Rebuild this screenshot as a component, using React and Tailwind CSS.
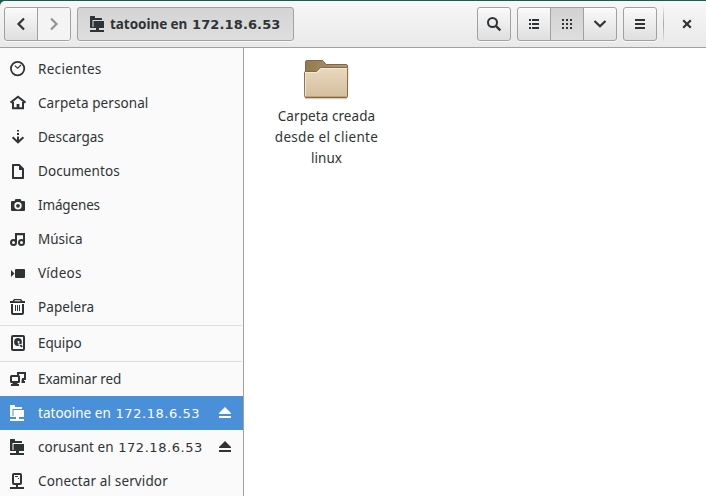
import React from "react";

const Svg = ({ children, className = "" }) => (
  <svg width="16" height="16" viewBox="0 0 16 16" fill="currentColor" className={`block shrink-0 ${className}`}>
    {children}
  </svg>
);

const Recent = () => (
  <Svg>
    <circle cx="7.6" cy="7.6" r="6.7" fill="none" stroke="currentColor" strokeWidth="1.8" />
    <path d="M4.8 4.6 7.6 7.2 11 4" fill="none" stroke="currentColor" strokeWidth="1.1" />
  </Svg>
);
const Home = () => (
  <Svg>
    <path d="M.5 7.6 8 1.7 15.500 7.600" fill="none" stroke="currentColor" strokeWidth="2" />
    <path d="M2 7h2v5.300h2.600V9h2.800v3.300H12V7h2v7.300H2z" />
  </Svg>
);
const Download = () => (
  <Svg>
    <path d="M7 1h2v1.500H7zM7 4h2v2H7zM7 7.500h2V12H7z" />
    <path d="M2.600 8.300 8 13.300l5.400-5" fill="none" stroke="currentColor" strokeWidth="2" />
  </Svg>
);
const Document = () => (
  <Svg>
    <path fillRule="evenodd" d="M2.800 1H9.500L14 5.500V15.200a.8.8 0 0 1-.8.8H2.800a.8.8 0 0 1-.8-.8V1.800a.8.8 0 0 1 .8-.8zM4 3v11h8V7H9V3z" />
  </Svg>
);
const Camera = () => (
  <Svg>
    <path fillRule="evenodd" d="M5.500 2h5L11.500 4H14a1 1 0 0 1 1 1v8a1 1 0 0 1-1 1H2a1 1 0 0 1-1-1V5a1 1 0 0 1 1-1h2.500zM8 5.100a3.700 3.700 0 1 0 0 7.400 3.700 3.700 0 0 0 0-7.400z" />
    <circle cx="8" cy="8.800" r="1.900" />
  </Svg>
);
const Music = () => (
  <Svg>
    <path d="M5 2h10v9.500h-2V4.200H7v7.300H5z" />
    <circle cx="3.500" cy="11.500" r="2.500" fill="none" stroke="currentColor" strokeWidth="2" />
    <circle cx="11.500" cy="11.500" r="2.500" fill="none" stroke="currentColor" strokeWidth="2" />
  </Svg>
);
const Video = () => (
  <Svg>
    <rect x="5" y="4" width="10" height="9" rx="1" />
    <path d="M1 5v7l3.500-3.500z" />
  </Svg>
);
const Trash = () => (
  <Svg>
    <path fillRule="evenodd" d="M4 0h7l1.500 2H15v2H0V2h2.500zM4.600 1.300v.9h5.800v-.9z" />
    <path d="M2 5v9q0 1 1 1h9q1 0 1-1V5" fill="none" stroke="currentColor" strokeWidth="2" />
    <path d="M5 6h1v6H5zM7 6h1v6H7zM9 6h1v6H9z" />
  </Svg>
);
const Disk = () => (
  <Svg>
    <rect x="2" y="1" width="12" height="14" rx="1" fill="none" stroke="currentColor" strokeWidth="2" />
    <circle cx="8" cy="7" r="3.900" />
    <path d="M8 7l4 5" stroke="currentColor" strokeWidth="2" />
    <circle cx="8.500" cy="7" r="1" fill="#fafafa" />
    <path d="M8.500 7 9.500 11M8.500 9.500h3" stroke="#fafafa" strokeWidth=".8" fill="none" />
  </Svg>
);
const Network = () => (
  <Svg>
    <path d="M8 4V2h7v6h-3" fill="none" stroke="currentColor" strokeWidth="2" />
    <rect x="1" y="5" width="8" height="6" rx=".5" fill="none" stroke="currentColor" strokeWidth="2" />
    <path d="M3 12h4l1 1h1v2H1v-2h1zM11.500 8.500h2.500V10h1v2h-3.500z" />
  </Svg>
);
const Remote = ({ className }) => (
  <Svg className={className}>
    <path d="M0 .5Q0 0 .5 0H4.500L5 .5V2h6.500q.5 0 .5.500V4H2.500v7H4v1H.5L0 11.500z" />
    <path d="M3.500 5h10.500v6.500q0 .5-.5.5H3.500z" />
    <path d="M6 12h3v2H6zM0 14h14v2H0z" />
  </Svg>
);
const Server = () => (
  <Svg>
    <rect x="3" y="1" width="8" height="10" rx="1" fill="none" stroke="currentColor" strokeWidth="2" />
    <path d="M5 3h3v1H5zM8 5h1v1H8zM6 12h2v2H6zM0 14h14v2H0z" />
  </Svg>
);
const Eject = () => (
  <svg width="12" height="12" viewBox="0 0 12 12" fill="currentColor" className="block shrink-0">
    <path d="M6 0 12 6v1H0V6zM0 9h12v2H0z" />
  </svg>
);

const Folder = () => (
  <svg width="48" height="44" viewBox="0 0 48 44" className="block">
    <defs>
      <linearGradient id="front" x1="0" y1="0" x2="0" y2="1">
        <stop offset="0" stopColor="#ead9c0" />
        <stop offset="1" stopColor="#d3bd9d" />
      </linearGradient>
      <linearGradient id="back" x1="0" y1="0" x2="1" y2="0">
        <stop offset="0" stopColor="#94794f" />
        <stop offset="1" stopColor="#b49c77" />
      </linearGradient>
    </defs>
    <path d="M3 40.500h42" stroke="#cfcfcf" strokeWidth="1.500" />
    <path d="M3.500 38V4q0-1.500 1.500-1.500h15q1 0 1.700 1l2.300 3h20q1.500 0 1.500 1.500v30z" fill="url(#back)" stroke="#806845" />
    <path d="M2.500 14.500q0-1 1-1h10.500q.9 0 1.500-1l2-2q.7-1 2-1H45q.7 0 .7 1l-.2 28q0 1-1 1H3.700q-1 0-1-1z" fill="url(#front)" stroke="#876b40" />
    <path d="M3.600 38V14.500h11q1 0 1.700-1l2-2q.4-1 1.500-1H45" fill="none" stroke="#f6ead8" strokeWidth=".9" />
    <path d="M3.500 39.200h41" stroke="#8e6424" strokeWidth="1" />
  </svg>
);

const SectionLine = () => <div className="mt-px h-px w-[242px] shrink-0 bg-[#dedede]" />;

const Row = ({ icon: Icon, label, address, spacing = "tracking-normal", selected, eject }) => (
  <div className={`flex h-[34px] shrink-0 items-center pl-[10px] pr-[12px] ${selected ? "bg-[#4a90d9] text-white" : "text-[#2e3436]"}`}>
    <Icon />
    <span className={`ml-3 flex-1 whitespace-nowrap text-[13.500px] leading-5 ${spacing}`}>
      {label}
      {address && <span className="font-['DejaVu_Sans',sans-serif] text-[13px] leading-none tracking-[0.550px]"> {address}</span>}
    </span>
    {eject && <Eject />}
  </div>
);

const btn = "border border-[#a1a1a1] bg-linear-to-b from-[#fafafa] to-[#dfdfdf] shadow-[inset_0_1px_0_#fff,0_1px_0_#fafafa]";

export default function App() {
  return (
    <div className="flex h-[496px] w-[706px] flex-col overflow-hidden bg-[#12604f] pt-px font-['Noto_Sans',sans-serif] text-[#2e3436]">
      <header className="flex h-[47px] shrink-0 items-start rounded-tl-[5px] border-b border-[#a1a1a1] bg-linear-to-b from-[#f7f7f7] to-[#e9e9e9] pl-1 pt-[6px]">
        <div className={`flex h-[34px] w-[67px] overflow-hidden rounded-[3px] ${btn}`}>
          <div className="flex w-[33px] items-center justify-center border-r border-[#a1a1a1]">
            <Svg><path d="M11 2.500 5.500 8l5.500 5.500" fill="none" stroke="currentColor" strokeWidth="2.200" /></Svg>
          </div>
          <div className="flex flex-1 items-center justify-center bg-[#f4f4f4] text-[#929595]">
            <Svg><path d="M5 2.500 10.500 8 5 13.500" fill="none" stroke="currentColor" strokeWidth="2.200" /></Svg>
          </div>
        </div>
        <div className="ml-[6px] flex h-[34px] w-[217px] items-center rounded-[3px] border border-[#a1a1a1] bg-linear-to-b from-[#d4d4d4] to-[#dedede] pl-3 shadow-[0_1px_0_#fafafa]">
          <Remote />
          <span className="ml-1 whitespace-nowrap text-[13.500px] font-bold leading-5 tracking-[-0.050px]">
            tatooine en<span className="font-['DejaVu_Sans',sans-serif] text-[13px] leading-none tracking-[0.120px]"> 172.18.6.53</span>
          </span>
        </div>
        <div className={`ml-[183px] flex h-[34px] w-[34px] items-center justify-center rounded-[3px] ${btn}`}>
          <Svg>
            <circle cx="6.500" cy="6.500" r="4.500" fill="none" stroke="currentColor" strokeWidth="2" />
            <path d="M9.500 9.500 14.300 14.300" stroke="currentColor" strokeWidth="2.400" />
          </Svg>
        </div>
        <div className={`ml-[6px] flex h-[34px] w-[100px] overflow-hidden rounded-[3px] ${btn}`}>
          <div className="flex w-8 items-center justify-center">
            <Svg><path d="M3 3h2v2H3zM3 7h2v2H3zM3 11h2v2H3zM6 3h7v2H6zM6 7h7v2H6zM6 11h7v2H6z" /></Svg>
          </div>
          <div className="flex w-[34px] items-center justify-center border-x border-[#a1a1a1] bg-linear-to-b from-[#d2d2d2] to-[#dedede]">
            <Svg><path d="M3 3h2v2H3zM7 3h2v2H7zM11 3h2v2h-2zM3 7h2v2H3zM7 7h2v2H7zM11 7h2v2h-2zM3 11h2v2H3zM7 11h2v2H7zM11 11h2v2h-2z" /></Svg>
          </div>
          <div className="flex flex-1 items-center justify-center">
            <Svg><path d="M2.500 5 8 10.300 13.500 5" fill="none" stroke="currentColor" strokeWidth="2.200" /></Svg>
          </div>
        </div>
        <div className={`ml-[6px] flex h-[34px] w-[34px] items-center justify-center rounded-[3px] ${btn}`}>
          <Svg><path d="M3 3h10v2H3zM3 7h10v2H3zM3 11h10v2H3z" /></Svg>
        </div>
        <div className="ml-[6px] h-[34px] w-px bg-linear-to-b from-[#e8e8e8] via-[#a8a8a8] to-[#e0e0e0]" />
        <div className="ml-[15px] flex h-[34px] items-center">
          <Svg><path d="M4.200 4.200 11.800 11.800M11.800 4.200 4.200 11.800" stroke="currentColor" strokeWidth="2.200" /></Svg>
        </div>
      </header>
      <div className="flex min-h-0 flex-1">
        <nav className="flex w-[244px] shrink-0 flex-col overflow-hidden border-r border-[#a1a1a1] bg-[#fafafa] pt-1">
          <Row icon={Recent} label="Recientes" spacing="tracking-[0.300px]" />
          <Row icon={Home} label="Carpeta personal" spacing="tracking-[0.080px]" />
          <Row icon={Download} label="Descargas" />
          <Row icon={Document} label="Documentos" spacing="tracking-[0.080px]" />
          <Row icon={Camera} label="Imágenes" spacing="tracking-[-0.150px]" />
          <Row icon={Music} label="Música" />
          <Row icon={Video} label="Vídeos" spacing="tracking-[0.250px]" />
          <Row icon={Trash} label="Papelera" spacing="tracking-[0.080px]" />
          <SectionLine />
          <Row icon={Disk} label="Equipo" spacing="tracking-[-0.100px]" />
          <SectionLine />
          <Row icon={Network} label="Examinar red" spacing="tracking-[-0.120px]" />
          <Row icon={Remote} label="tatooine en" address="172.18.6.53" spacing="tracking-[0.020px]" selected eject />
          <Row icon={Remote} label="corusant en" address="172.18.6.53" spacing="tracking-[0.020px]" eject />
          <Row icon={Server} label="Conectar al servidor" spacing="tracking-[0.130px]" />
        </nav>
        <main className="flex-1 bg-white pl-[22px] pt-[10px]">
          <div className="flex w-[120px] flex-col items-center">
            <Folder />
            <div className="mt-1 w-[121px] pl-px text-center text-[13.500px] leading-[21px]">
              <div className="tracking-[0.080px]">Carpeta creada</div>
              <div className="tracking-[0.320px]">desde el cliente</div>
              <div>linux</div>
            </div>
          </div>
        </main>
      </div>
    </div>
  );
}
